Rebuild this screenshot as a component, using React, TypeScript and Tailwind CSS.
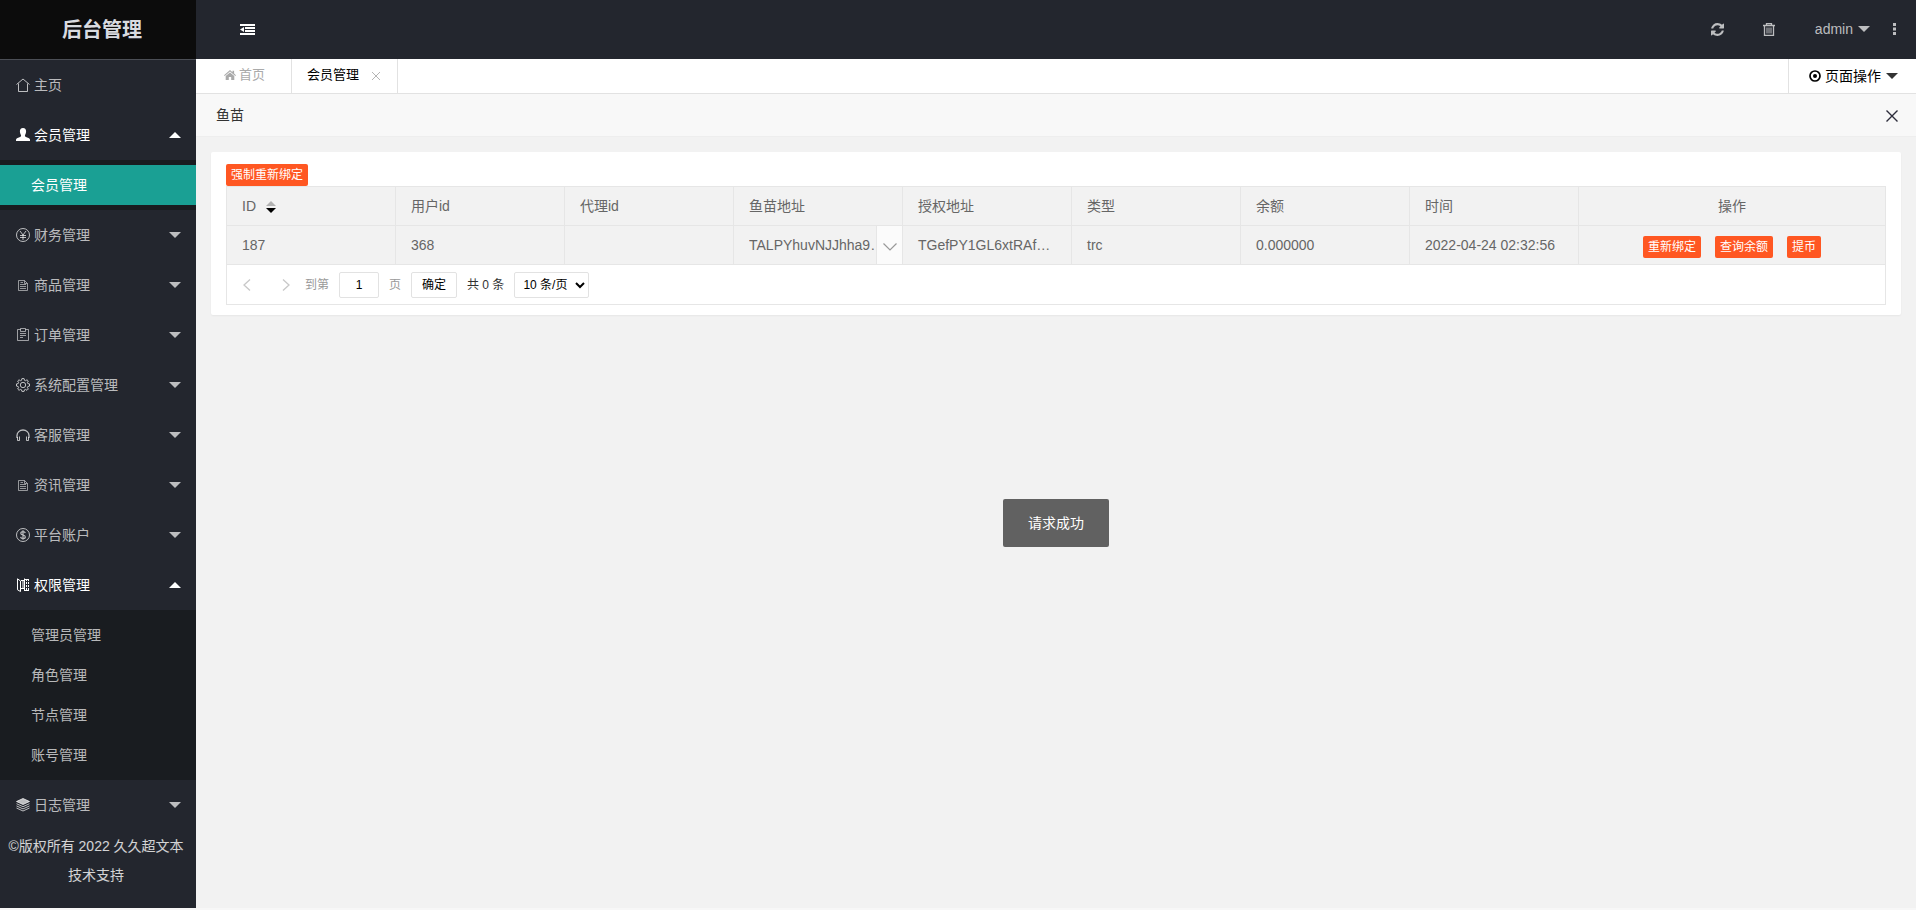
import { useState } from 'react';
import type { ReactNode } from 'react';

const icons: Record<string, ReactNode> = {
  home: <path d="M.5 6.500 7 1l6.500 5.500M2.500 5.500v8h9v-8" fill="none" stroke="currentColor" />,
  user: (
    <path
      d="M7 0c2.200 0 3.200 1.600 3.100 3.600C10 5.500 9.300 6.400 9 7.200c-.3 1 .2 1.500 1.500 2 2 .7 3.500 1.200 3.500 2.500V13H0v-1.300C0 10.400 1.500 9.900 3.500 9.200 4.800 8.700 5.300 8.200 5 7.200c-.3-.8-1-1.700-1.100-3.600C3.800 1.600 4.800 0 7 0Z"
      fill="currentColor"
    />
  ),
  yen: (
    <g fill="none" stroke="currentColor">
      <circle cx="7" cy="7" r="6.500" />
      <path d="m4 3 3 4 3-4M7 7v5M4 7.500h6M4 9.500h6" />
    </g>
  ),
  file: (
    <g fill="none" stroke="currentColor" opacity=".75">
      <path d="M2.500 2.500h6l3 3v7h-9ZM8.500 2.500v3h3" />
      <path d="M4.500 4.500h2.500M4 6.500h6M4 8.500h6M4 10.500h6" />
    </g>
  ),
  clipboard: (
    <g fill="none" stroke="currentColor" opacity=".8">
      <path d="M4.500 1.500h-3v11h11v-11h-3M4.500.500h5v3h-5ZM4 5.500h6M4 7.500h6M4 9.500h3" />
    </g>
  ),
  gear: (
    <g fill="none" stroke="currentColor">
      <circle cx="7" cy="7" r="2.700" />
      <path
        d="M5.900.6h2.200l.4 1.700 1 .4L11 1.800 12.300 3l-.9 1.600.4 1 1.700.3v2.200l-1.700.4-.4 1 .9 1.500-1.300 1.300-1.500-.9-1 .4-.4 1.600H5.900l-.4-1.600-1-.4-1.500.9L1.700 11l.9-1.500-.4-1L.5 8.100V5.900l1.700-.3.4-1L1.700 3 3 1.800l1.500.9 1-.4Z"
        strokeLinejoin="round"
      />
    </g>
  ),
  headset: (
    <g fill="none" stroke="currentColor">
      <path d="M1 10V7.500a6 5.500 0 0 1 12 0V10" strokeWidth="1.300" />
      <path d="M1.500 9v3.500h2v-4M12.500 9v3.500h-2v-4" />
    </g>
  ),
  dollar: (
    <g fill="none" stroke="currentColor">
      <circle cx="7" cy="7" r="6.500" />
      <path
        d="M9.300 5C9 3.900 8 3.600 7 3.600c-1.300 0-2.200.6-2.200 1.600C4.800 7.500 9.300 6.500 9.300 8.900c0 1-.9 1.600-2.300 1.600S4.800 9.900 4.600 8.800M7 2.200v9.600"
        strokeWidth="1.200"
      />
    </g>
  ),
  book: (
    <g fill="none" stroke="currentColor">
      <path d="M4.500 3 1.500.800v11l3 1.700ZM5 2.500h3.500v8H5M7 3v7M8.500.500v12.500" />
      <path d="M10.500 1v12M12.500 1v12" strokeDasharray="2 1" />
      <path d="M9 1.500h4M9 12.500h4" />
    </g>
  ),
  layers: (
    <g stroke="currentColor" fill="none">
      <path d="m7 .5 6.500 3L7 6.500.5 3.500Z" fill="currentColor" />
      <path d="m.5 5.700 6.500 3 6.500-3M.5 7.900l6.500 3 6.500-3M.5 10l6.500 3 6.500-3" />
    </g>
  ),
};

type MenuItem = { label: string; icon: string; children?: string[]; leaf?: boolean };

const menu: MenuItem[] = [
  { label: '主页', icon: 'home', leaf: true },
  { label: '会员管理', icon: 'user', children: ['会员管理'] },
  { label: '财务管理', icon: 'yen' },
  { label: '商品管理', icon: 'file' },
  { label: '订单管理', icon: 'clipboard' },
  { label: '系统配置管理', icon: 'gear' },
  { label: '客服管理', icon: 'headset' },
  { label: '资讯管理', icon: 'file' },
  { label: '平台账户', icon: 'dollar' },
  { label: '权限管理', icon: 'book', children: ['管理员管理', '角色管理', '节点管理', '账号管理'] },
  { label: '日志管理', icon: 'layers' },
];

const columns = ['ID', '用户id', '代理id', '鱼苗地址', '授权地址', '类型', '余额', '时间'];

function Caret({ up = false }: { up?: boolean }) {
  return (
    <svg width="12" height="6" viewBox="0 0 12 6" fill="currentColor" aria-hidden="true">
      <path d={up ? 'M0 6 6 0l6 6Z' : 'M0 0h12L6 6Z'} />
    </svg>
  );
}

function Sidebar() {
  const [active, setActive] = useState('会员管理');

  return (
    <aside className="flex w-49 shrink-0 flex-col bg-[#23262e] text-white/70">
      <h1 className="h-15 border-b border-[#4b4e55] bg-[#0c0c0c] pl-2 text-center text-xl leading-[60px] font-bold text-[#d9dbe0]">
        后台管理
      </h1>
      <nav>
        <ul>
          {menu.map((item) => (
            <li key={item.label}>
              <a
                href="#"
                className={`flex h-12.5 items-center gap-1 pr-[15px] pl-4 ${item.children ? 'text-white' : ''}`}
              >
                <svg width="14" height="14" viewBox="0 0 14 14" aria-hidden="true">
                  {icons[item.icon]}
                </svg>
                <span className="flex-1">{item.label}</span>
                {!item.leaf && <Caret up={!!item.children} />}
              </a>
              {item.children && (
                <ul className="bg-[#191c20] py-[5px]">
                  {item.children.map((child) => (
                    <li key={child}>
                      <a
                        href="#"
                        onClick={() => setActive(child)}
                        className={`block h-10 pl-[31px] leading-10 ${child === active ? 'bg-[#1aa094] text-white' : ''}`}
                      >
                        {child}
                      </a>
                    </li>
                  ))}
                </ul>
              )}
            </li>
          ))}
        </ul>
      </nav>
      <footer className="pt-0.5 pr-2 pl-1 text-center leading-[29px] text-white/80">
        ©版权所有 2022 久久超文本技术支持
      </footer>
    </aside>
  );
}

function Header() {
  return (
    <header className="flex h-[59px] items-center justify-between bg-[#23262e] pr-5 pl-11 text-white/70">
      <button type="button" aria-label="收起菜单" className="text-white">
        <svg width="15" height="12" viewBox="0 0 15 12" fill="currentColor">
          <path d="M0 0h15v2H0ZM5 3h10v2H5ZM5 6h10v2H5ZM0 9h15v2H0ZM0 5.500 4 3v5Z" />
        </svg>
      </button>
      <div className="flex items-center pb-px">
        <button type="button" aria-label="刷新" className="mr-[39px]">
          <svg width="13" height="13" viewBox="0 0 1536 1536" fill="currentColor">
            <path d="M1511 928q0 5-1 7-64 268-268 434.500T764 1536q-146 0-282.500-55T238 1324l-129 129q-19 19-45 19t-45-19-19-45V960q0-26 19-45t45-19h448q26 0 45 19t19 45-19 45l-137 137q71 66 161 102t187 36q134 0 250-65t186-179q11-17 53-117 8-23 30-23h192q13 0 22.500 9.500T1511 928zM1536 128v448q0 26-19 45t-45 19h-448q-26 0-45-19t-19-45 19-45l138-138Q969 256 768 256q-134 0-250 65T332 500q-11 17-53 117-8 23-30 23H50q-13 0-22.500-9.500T18 608v-7q65-268 270-434.500T768 0q146 0 284 55.500T1297 212l130-129q19-19 45-19t45 19 19 45z" />
          </svg>
        </button>
        <button type="button" aria-label="清除缓存" className="mr-10">
          <svg width="12" height="13" viewBox="0 0 12 13" fill="none" stroke="currentColor">
            <path d="M0 2.500h12M3.500 2V.5h5V2M1.500 2.500V12.500h9V2.500" strokeWidth="1.300" />
            <path d="M4 4.500v6M6 4.500v6M8 4.500v6" />
          </svg>
        </button>
        <a href="#" className="mr-[23px] flex items-center gap-[5px]">
          admin
          <Caret />
        </a>
        <button type="button" aria-label="更多">
          <svg width="3" height="12" viewBox="0 0 3 12" fill="currentColor">
            <path d="M0 0h3v3H0ZM0 4.500h3v3H0ZM0 9h3v3H0Z" />
          </svg>
        </button>
      </div>
    </header>
  );
}

function TabBar() {
  return (
    <div className="flex h-[35px] border-b border-[#e2e2e2] bg-white text-[13px] text-black">
      <a href="#" className="flex w-24 items-center gap-[3px] border-r border-[#e2e2e2] pb-0.5 pl-7 text-[#aaa]">
        <svg width="12" height="10" viewBox="0 0 12 10" fill="currentColor" aria-hidden="true">
          <path d="M6 0 8.500 2.200V.7h1.600v2.900L12 5.200l-.7.8L6 1.500.7 6 0 5.200ZM6 2.400l4.300 3.600v4H7.200V7H4.800v3H1.700V6Z" />
        </svg>
        首页
      </a>
      <div className="flex w-26.5 items-center justify-between border-r border-[#e2e2e2] pr-[17px] pb-0.5 pl-[15px]">
        <a href="#">会员管理</a>
        <button type="button" aria-label="关闭标签" className="pt-0.5 text-[#b5b5b5]">
          <svg width="8" height="8" viewBox="0 0 8 8" stroke="currentColor">
            <path d="m0 0 8 8M8 0 0 8" />
          </svg>
        </button>
      </div>
      <button
        type="button"
        className="ml-auto flex w-32 items-center border-l border-[#e2e2e2] pl-5 text-sm"
      >
        <svg width="12" height="12" viewBox="0 0 12 12" aria-hidden="true">
          <circle cx="6" cy="6" r="5" fill="none" stroke="currentColor" strokeWidth="1.700" />
          <circle cx="6" cy="6" r="2" fill="currentColor" />
        </svg>
        <span className="mr-[5px] ml-1">页面操作</span>
        <span className="text-[#333]">
          <Caret />
        </span>
      </button>
    </div>
  );
}

function XsButton({ children }: { children: ReactNode }) {
  return (
    <button type="button" className="h-[22px] rounded-xs bg-[#ff5722] px-[5px] text-xs leading-[22px] text-white">
      {children}
    </button>
  );
}

function DataTable() {
  const cell = 'h-[39px] border border-[#e6e6e6] px-[15px] text-left font-normal';

  return (
    <table className="w-full table-fixed border-collapse bg-[#f2f2f2] text-[#666]">
      <colgroup>
        {columns.map((c) => (
          <col key={c} className="w-[169px]" />
        ))}
        <col />
      </colgroup>
      <thead>
        <tr>
          {columns.map((c) => (
            <th key={c} className={cell}>
              {c === 'ID' ? (
                <button type="button" className="flex items-center gap-2.5">
                  ID
                  <svg width="10" height="12" viewBox="0 0 10 12" className="mt-0.5" aria-hidden="true">
                    <path d="M0 5 5 0l5 5Z" fill="#b2b2b2" />
                    <path d="M0 7h10l-5 5Z" fill="#000" />
                  </svg>
                </button>
              ) : (
                c
              )}
            </th>
          ))}
          <th className="border border-[#e6e6e6] text-center font-normal">操作</th>
        </tr>
      </thead>
      <tbody>
        <tr>
          <td className={cell}>187</td>
          <td className={cell}>368</td>
          <td className={cell}></td>
          <td className="relative border border-[#e6e6e6] pl-[15px]">
            <span className="block overflow-hidden whitespace-nowrap">TALPYhuvNJJhha9…</span>
            <button
              type="button"
              aria-label="展开"
              className="absolute inset-y-0 right-0 flex w-[26px] items-center justify-center border-l border-[#e6e6e6] bg-[#fbfbfb] pt-1 text-[#999]"
            >
              <svg width="14" height="8" viewBox="0 0 14 8" fill="none" stroke="currentColor">
                <path d="m.5.500 6.500 6.500L13.500.500" strokeWidth="1.200" />
              </svg>
            </button>
          </td>
          <td className={cell}>TGefPY1GL6xtRAf…</td>
          <td className={cell}>trc</td>
          <td className={cell}>0.000000</td>
          <td className={`${cell} whitespace-nowrap`}>2022-04-24 02:32:56</td>
          <td className="border border-[#e6e6e6]">
            <div className="flex justify-center gap-3.5 pt-1">
              <XsButton>重新绑定</XsButton>
              <XsButton>查询余额</XsButton>
              <XsButton>提币</XsButton>
            </div>
          </td>
        </tr>
      </tbody>
    </table>
  );
}

function Pagination() {
  const [page, setPage] = useState('1');

  return (
    <div className="flex h-10 items-center border border-t-0 border-[#e6e6e6] pl-4 text-xs text-[#333]">
      <button type="button" aria-label="上一页" className="mr-[31px] text-[#c8c8c8]">
        <svg width="8" height="12" viewBox="0 0 8 12" fill="none" stroke="currentColor" strokeWidth="1.300">
          <path d="M7 .5 1 6l6 5.500" />
        </svg>
      </button>
      <button type="button" aria-label="下一页" className="mr-[15px] text-[#c8c8c8]">
        <svg width="8" height="12" viewBox="0 0 8 12" fill="none" stroke="currentColor" strokeWidth="1.300">
          <path d="m1 .5 6 5.500-6 5.500" />
        </svg>
      </button>
      <label className="flex items-center gap-2.5 text-[#999]">
        到第
        <input
          value={page}
          onChange={(e) => setPage(e.target.value)}
          className="h-[26px] w-10 rounded-xs border border-[#e2e2e2] bg-white text-center text-black"
        />
        页
      </label>
      <button type="button" className="mx-2.5 h-[26px] w-[46px] rounded-xs border border-[#e2e2e2] bg-white text-black">
        确定
      </button>
      <span>共 0 条</span>
      <select
        aria-label="每页条数"
        className="ml-2.5 h-[26px] w-[75px] rounded-xs border border-[#e2e2e2] bg-white pl-1 text-black"
      >
        <option>10 条/页</option>
        <option>20 条/页</option>
        <option>50 条/页</option>
      </select>
    </div>
  );
}

export default function App() {
  return (
    <div className="flex min-h-screen bg-[#f7f7f7] pb-0.5 font-['Liberation_Sans','Noto_Sans_CJK_SC',sans-serif] text-sm">
      <Sidebar />
      <div className="flex min-w-0 flex-1 flex-col">
        <Header />
        <TabBar />
        <div className="flex h-[43px] items-center justify-between border-b border-[#eee] bg-[#f8f8f8] pr-[18px] pl-5 text-[#333]">
          <h2>鱼苗</h2>
          <button type="button" aria-label="关闭" className="pt-0.5">
            <svg width="12" height="12" viewBox="0 0 12 12" stroke="#2d2c3b" strokeWidth="1.400">
              <path d="m.5.500 11 11M11.500.500l-11 11" />
            </svg>
          </button>
        </div>
        <main className="relative flex-1 bg-[#f2f2f2] p-[15px]">
          <section className="rounded-xs bg-white px-[15px] pt-3 pb-2.5 shadow-[0_1px_2px_rgba(0,0,0,0.05)]">
            <div className="flex">
              <XsButton>强制重新绑定</XsButton>
            </div>
            <DataTable />
            <Pagination />
          </section>
          <div
            role="status"
            className="absolute top-1/2 left-1/2 -translate-1/2 rounded-xs bg-black/60 px-[25px] py-3 leading-6 text-white"
          >
            请求成功
          </div>
        </main>
      </div>
    </div>
  );
}
